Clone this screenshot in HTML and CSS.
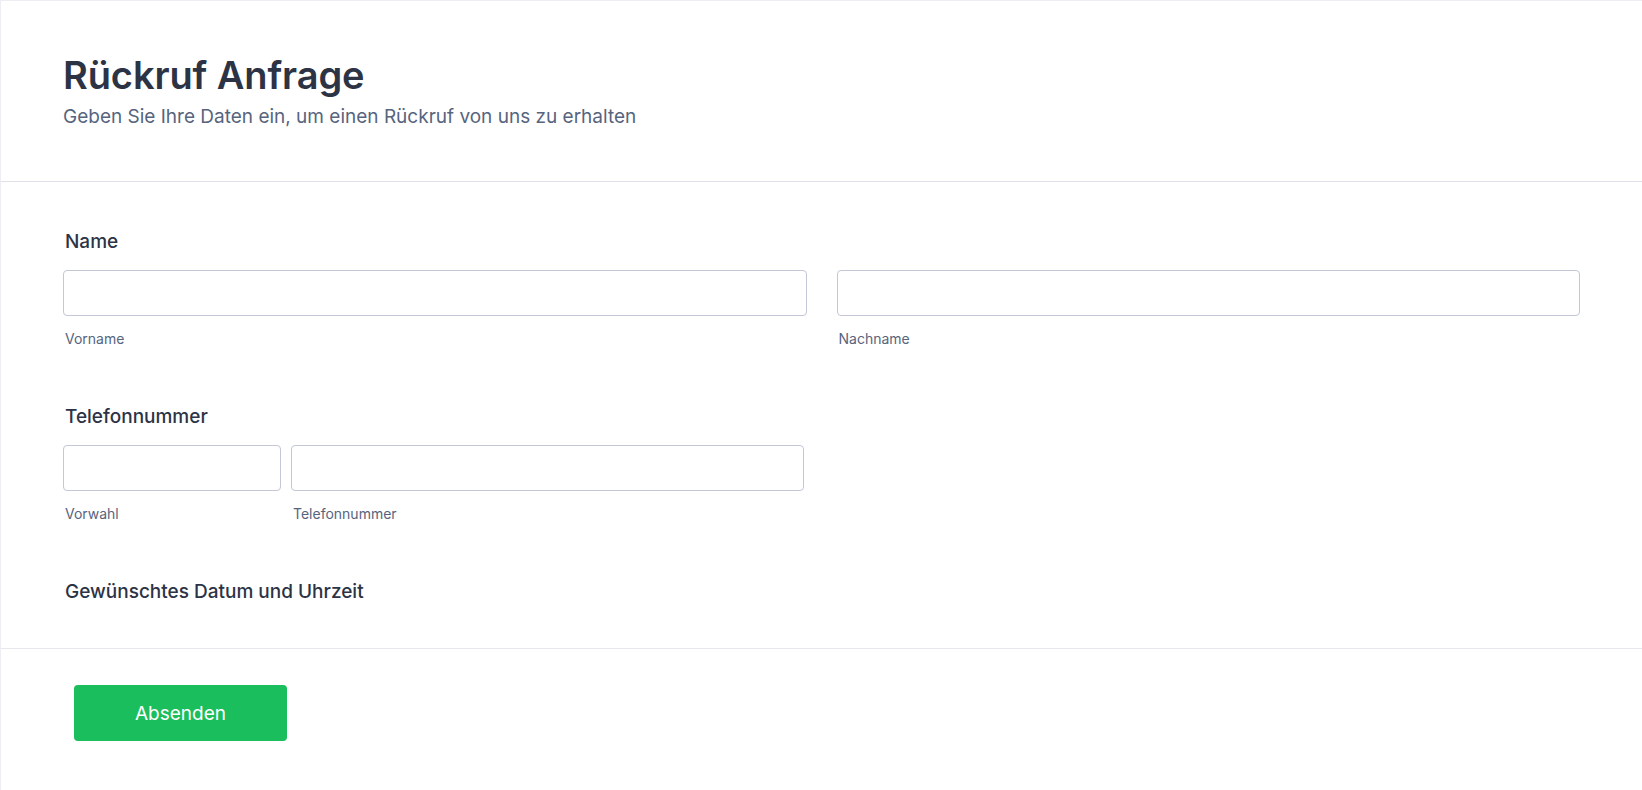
FILE: index.html
```html
<!DOCTYPE html>
<html lang="de">
<head>
<meta charset="utf-8">
<title>Rückruf Anfrage</title>
<link rel="stylesheet" href="styles.css">
</head>
<body>
<div class="card">
  <header class="form-header">
    <h1 class="title">Rückruf Anfrage</h1>
    <p class="subtitle">Geben Sie Ihre Daten ein, um einen Rückruf von uns zu erhalten</p>
  </header>
  <section class="form-body">
    <div class="field">
      <label class="label">Name</label>
      <div class="row name-row">
        <div class="sub">
          <input class="input" type="text">
          <span class="sublabel">Vorname</span>
        </div>
        <div class="sub">
          <input class="input" type="text">
          <span class="sublabel">Nachname</span>
        </div>
      </div>
    </div>
    <div class="field">
      <label class="label">Telefonnummer</label>
      <div class="row phone-row">
        <div class="sub area">
          <input class="input" type="text">
          <span class="sublabel">Vorwahl</span>
        </div>
        <div class="sub number">
          <input class="input" type="text">
          <span class="sublabel">Telefonnummer</span>
        </div>
      </div>
    </div>
    <div class="field last">
      <label class="label">Gewünschtes Datum und Uhrzeit</label>
    </div>
  </section>
  <footer class="form-footer">
    <button class="submit" type="button">Absenden</button>
  </footer>
</div>
</body>
</html>
```

FILE: styles.css
```css
* { box-sizing: border-box; }
html, body { margin: 0; padding: 0; background: #ffffff; }
body {
  font-family: Inter, "Noto Sans", "Liberation Sans", sans-serif;
  color: #2c3345;
  height: 790px;
  overflow: hidden;
}
.card {
  border-top: 1px solid #eceef3;
  border-left: 1px solid #eceef3;
  min-height: 790px;
}
.form-header {
  padding: 50px 63px 52px 62px;
  border-bottom: 1px solid #dfe1e8;
}
.title {
  margin: 0;
  font-size: 38px;
  line-height: 48px;
  font-weight: 600;
  color: #2c3345;
  letter-spacing: -0.1px;
}
.subtitle {
  margin: 6px 0 0;
  font-size: 19px;
  line-height: 24px;
  font-weight: 400;
  color: #57647e;
}
.form-body {
  padding: 48px 62px 44px 62px;
  border-bottom: 1px solid #e6e8ee;
}
.field { margin-bottom: 57px; }
.field.last { margin-bottom: 0; }
.label {
  display: block;
  font-size: 19px;
  line-height: 24px;
  font-weight: 500;
  color: #2c3345;
  padding-left: 2px;
  margin-bottom: 16px;
}
.field.last .label { margin-bottom: 0; }
.row { display: flex; }
.name-row { gap: 30px; }
.name-row .sub { flex: 1; }
.phone-row { gap: 10px; }
.phone-row .area { width: 218px; }
.phone-row .number { width: 513px; }
.sub { display: flex; flex-direction: column; }
.input {
  display: block;
  width: 100%;
  height: 46px;
  border: 1px solid #c3c7d6;
  border-radius: 4px;
  background: #ffffff;
  margin: 0;
  padding: 0 10px;
  font: inherit;
}
.sublabel {
  display: block;
  margin-top: 14px;
  font-size: 14px;
  line-height: 18px;
  color: #57647e;
  padding-left: 2px;
}
.form-footer {
  padding: 36px 0 0 73px;
}
.submit {
  width: 213px;
  height: 56px;
  border: none;
  border-radius: 4px;
  background: #1bbe5c;
  color: #ffffff;
  font-family: Inter, "Noto Sans", "Liberation Sans", sans-serif;
  font-size: 19px;
  font-weight: 400;
  cursor: pointer;
}
```
